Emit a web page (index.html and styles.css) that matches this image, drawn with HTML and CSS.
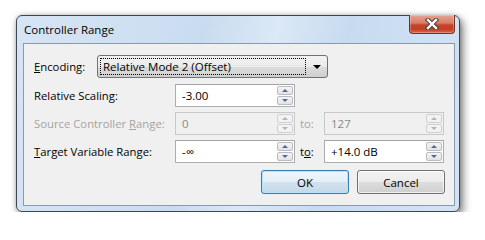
FILE: index.html
```html
<!DOCTYPE html>
<html>
<head>
<meta charset="utf-8">
<title>Controller Range</title>
<link rel="stylesheet" href="styles.css">
</head>
<body>
<div class="window">
  <div class="titlebar">
    <span class="title">Controller Range</span>
    <div class="close">
      <svg width="18" height="12" viewBox="0 0 18 12">
        <path d="M5 2 L13 10 M13 2 L5 10" stroke="#4a3a3a" stroke-width="4.4" stroke-linecap="square" fill="none"/>
        <path d="M5 2 L13 10 M13 2 L5 10" stroke="#ffffff" stroke-width="2.4" stroke-linecap="square" fill="none"/>
      </svg>
    </div>
  </div>
  <div class="client">
    <div class="enc-row">
      <span class="label enc-label"><u>E</u>ncoding:</span>
      <div class="combo">
        <span class="combo-text">Relative Mode 2 (Offset)</span>
        <span class="combo-arrow"></span>
      </div>
    </div>
    <div class="grid">
      <span class="label">Relative Scaling:</span>
      <div class="spin">
        <span class="spin-text">-3.00</span>
        <div class="spin-btns"><span class="sb up"></span><span class="sb down"></span></div>
      </div>
      <span></span><span></span>

      <span class="label disabled">Source Controller <u>R</u>ange:</span>
      <div class="spin off">
        <span class="spin-text">0</span>
        <div class="spin-btns"><span class="sb up"></span><span class="sb down"></span></div>
      </div>
      <span class="label to disabled">to:</span>
      <div class="spin off">
        <span class="spin-text">127</span>
        <div class="spin-btns"><span class="sb up"></span><span class="sb down"></span></div>
      </div>

      <span class="label"><u>T</u>arget Variable Range:</span>
      <div class="spin">
        <span class="spin-text">-∞</span>
        <div class="spin-btns"><span class="sb up"></span><span class="sb down"></span></div>
      </div>
      <span class="label to">t<u>o</u>:</span>
      <div class="spin">
        <span class="spin-text">+14.0 dB</span>
        <div class="spin-btns"><span class="sb up"></span><span class="sb down"></span></div>
      </div>
    </div>
    <div class="buttons">
      <div class="btn ok">OK</div>
      <div class="btn">Cancel</div>
    </div>
  </div>
</div>
</body>
</html>
```

FILE: styles.css
```css
* { box-sizing: border-box; }
body {
  margin: 0;
  background: #ffffff;
  font-family: "Open Sans", "DejaVu Sans", sans-serif;
  font-size: 11.3px;
  color: #000;
}
.window {
  margin: 15px 0 0 16px;
  width: 444px;
  height: 197px;
  border: 1px solid #3d4650;
  border-radius: 6px;
  background: linear-gradient(100deg, #d6e5f5 0%, #c9dcef 40%, #dbe8f6 55%, #c7dbf0 70%, #d3e3f4 100%);
  box-shadow: 3px 4px 9px rgba(0,0,0,0.5), 0 0 4px rgba(0,0,0,0.2);
  padding: 0 4px 5px 6px;
}
.titlebar {
  height: 27px;
  display: flex;
  align-items: flex-start;
}
.title {
  padding: 6px 0 0 1px;
  font-size: 11.5px;
  color: #000;
  line-height: 15px;
}
.close {
  margin-left: auto;
  width: 46px;
  height: 19px;
  margin-top: -1px;
  border: 1px solid #6e3325;
  border-top: none;
  border-radius: 0 0 4px 4px;
  background: linear-gradient(#e6a493 0%, #d77c66 45%, #c4452b 55%, #c73f24 80%, #d66a4e 100%);
  display: flex;
  align-items: center;
  justify-content: center;
  box-shadow: inset 0 0 0 1px rgba(255,255,255,0.25);
}
.close svg { display: block; }
.client {
  width: 432px;
  height: 163px;
  border: 1px solid #8a9aad;
  background: #f0f0f0;
  padding: 11px 9px 0 10px;
}
.enc-row {
  display: flex;
  align-items: center;
  height: 23px;
}
.enc-label { width: 63px; }
.label { line-height: 15px; white-space: nowrap; }
.disabled { color: #a3a3a3; }
.combo {
  width: 231px;
  height: 23px;
  border: 1px solid #707070;
  border-radius: 3px;
  background: linear-gradient(#f2f2f2 0%, #ebebeb 50%, #dddddd 51%, #cfcfcf 100%);
  display: flex;
  align-items: center;
  padding: 2px;
}
.combo-text {
  flex: 1;
  height: 17px;
  border: 1px dotted #000;
  padding-left: 2px;
  line-height: 15px;
  font-size: 11.5px;
}
.combo-arrow {
  width: 0; height: 0;
  border-left: 4px solid transparent;
  border-right: 4px solid transparent;
  border-top: 4px solid #000;
  margin: 1px 4px 0 7px;
}
.grid {
  margin-top: 6px;
  display: grid;
  grid-template-columns: 141px 120px 29px 120px;
  grid-auto-rows: 23px;
  row-gap: 5px;
  align-items: center;
}
.to { padding-left: 5px; }
.spin {
  height: 23px;
  border: 1px solid #abadb3;
  border-top-color: #a0a3aa;
  background: #fff;
  display: flex;
  align-items: center;
  padding: 1px;
}
.spin.off { background: #f0f0f0; border-color: #c8c8c8; color: #8a8a8a; }
.spin-text { flex: 1; padding-left: 5px; font-size: 11.5px; line-height: 15px; }
.spin-btns {
  width: 16px;
  height: 19px;
  display: flex;
  flex-direction: column;
  gap: 1px;
}
.sb {
  flex: 1;
  border: 1px solid #b9bbbf;
  border-radius: 2px;
  background: linear-gradient(#f4f4f4, #e3e3e3);
  display: flex;
  align-items: center;
  justify-content: center;
}
.sb::after {
  content: "";
  width: 0; height: 0;
  border-left: 3.5px solid transparent;
  border-right: 3.5px solid transparent;
}
.up::after { border-bottom: 3.5px solid #4d6a9c; }
.down::after { border-top: 3.5px solid #4d6a9c; }
.off .sb { border-color: #d0d0d0; background: #f2f2f2; }
.off .up::after { border-bottom-color: #b4b4b4; }
.off .down::after { border-top-color: #b4b4b4; }
.buttons {
  margin-top: 7px;
  display: flex;
  justify-content: flex-end;
  gap: 8px;
  padding-right: 0;
}
.btn {
  width: 88px;
  height: 24px;
  border: 1px solid #707070;
  border-radius: 3px;
  background: linear-gradient(#f2f2f2 0%, #ebebeb 50%, #dddddd 51%, #cfcfcf 100%);
  box-shadow: inset 0 0 0 1px rgba(255,255,255,0.7);
  display: flex;
  align-items: center;
  justify-content: center;
  font-size: 11.5px;
}
.btn.ok {
  border-color: #3c7fb1;
  background: linear-gradient(#eef6fb 0%, #e3eef7 50%, #d1e2ef 51%, #c6d8e7 100%);
  box-shadow: inset 0 0 0 1px #b6e2fa, 0 0 1px #9bd0f0;
}
```
